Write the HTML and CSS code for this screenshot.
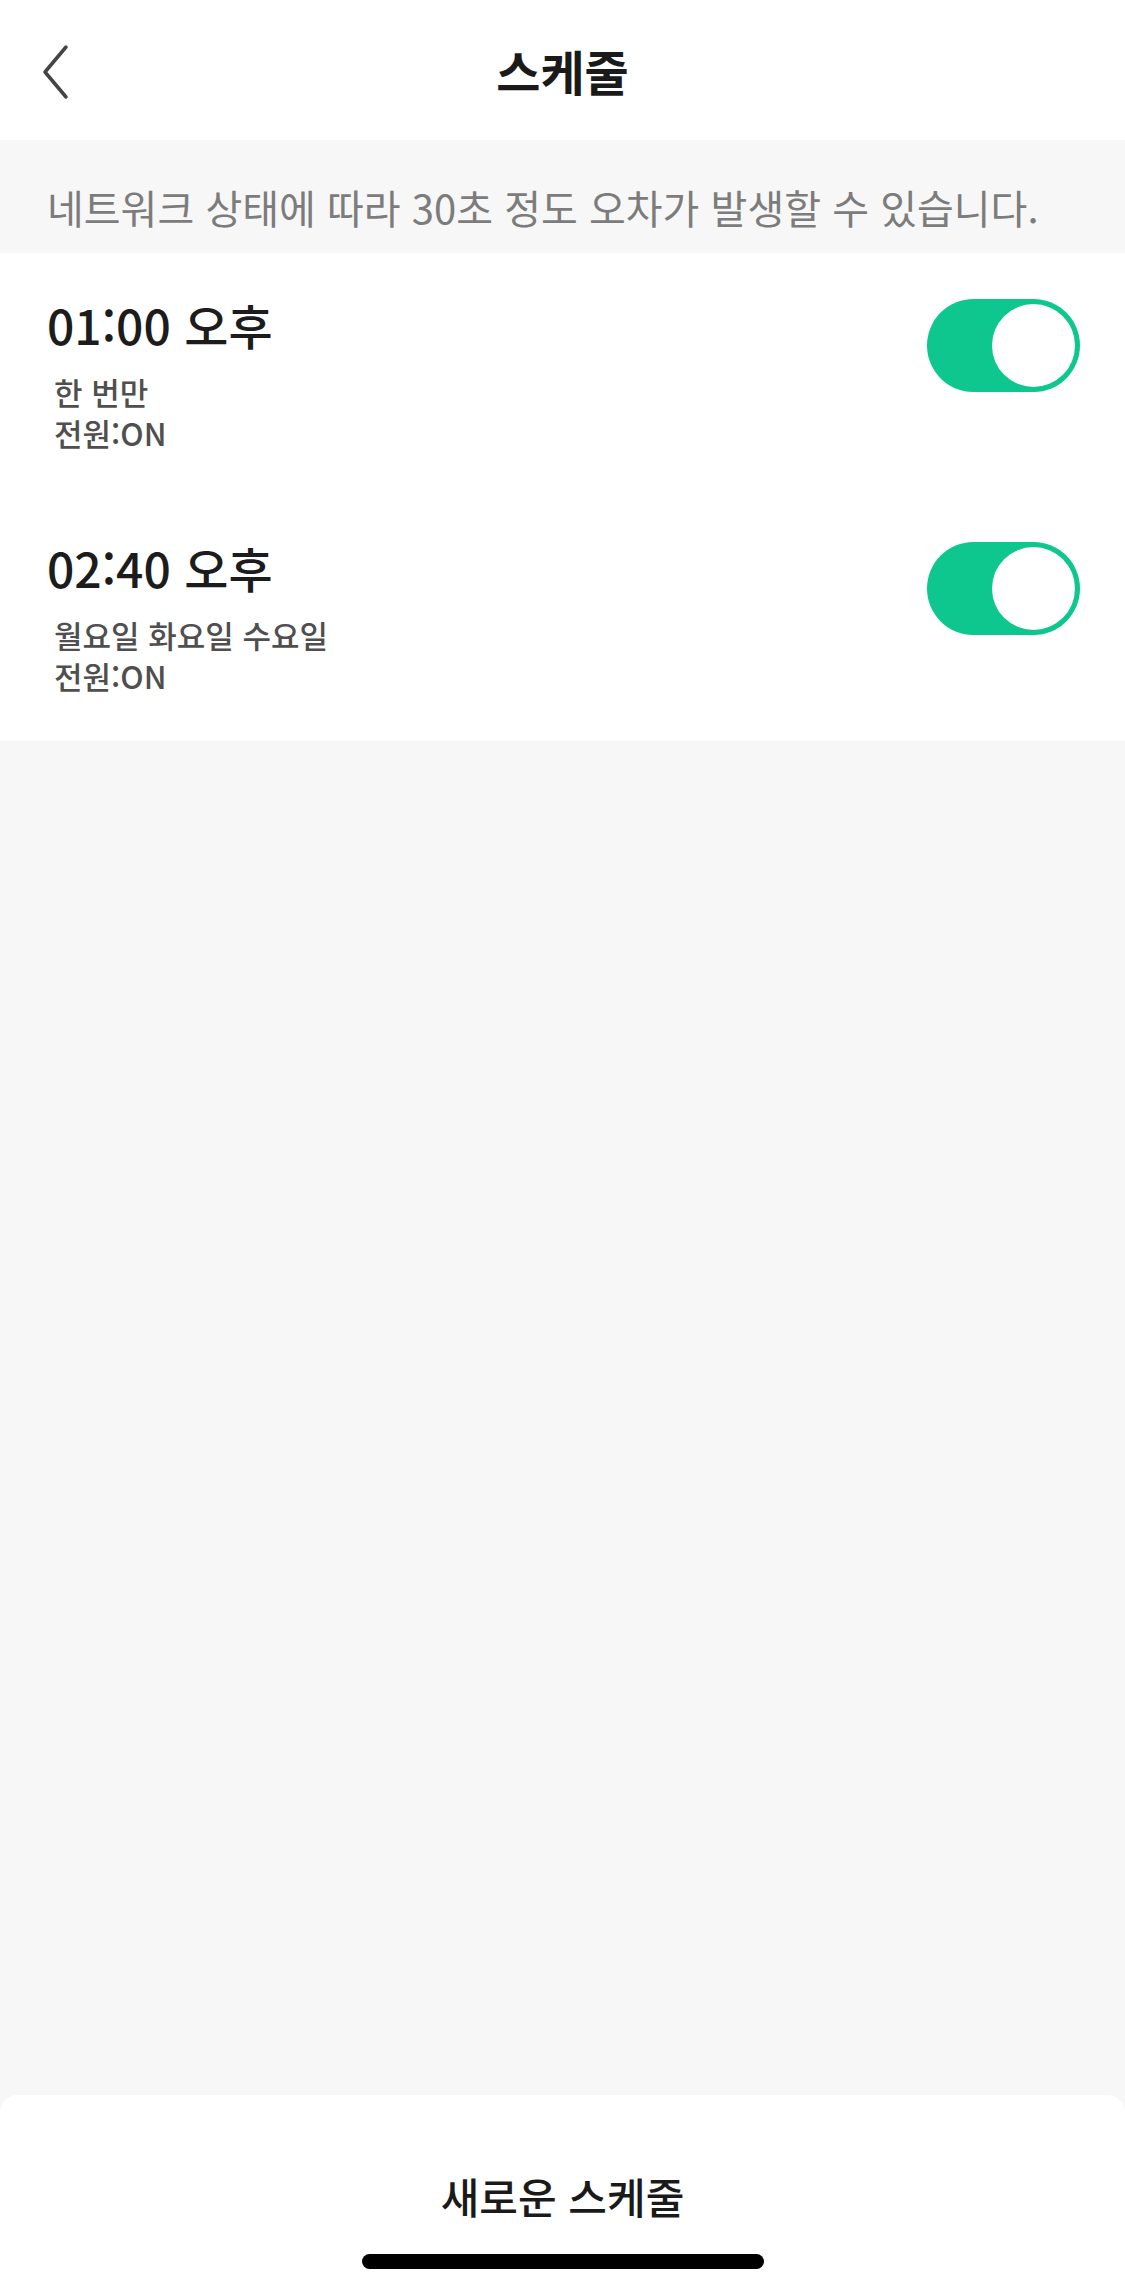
FILE: index.html
```html
<!DOCTYPE html>
<html lang="ko">
<head>
    <meta charset="UTF-8">
    <meta name="viewport" content="width=device-width, initial-scale=1.0">
    <title>스케줄</title>
    <link rel="stylesheet" href="styles.css">
</head>
<body>
    <div class="screen">
        <header class="top-bar">
            <button class="back-button" aria-label="뒤로">
                <svg width="32" height="56" viewBox="0 0 32 56">
                    <path d="M26 3 L5 28 L26 53" fill="none" stroke="#444" stroke-width="3.5" stroke-linecap="round" stroke-linejoin="round"/>
                </svg>
            </button>
            <h1 class="title">스케줄</h1>
            <div></div>
        </header>

        <div class="notice">네트워크 상태에 따라 30초 정도 오차가 발생할 수 있습니다.</div>

        <div class="schedule-list">
            <div class="schedule-item">
                <div class="schedule-info">
                    <div class="schedule-time">01:00 오후</div>
                    <div class="schedule-sub">한 번만</div>
                    <div class="schedule-sub">전원:ON</div>
                </div>
                <div class="toggle on"><span class="knob"></span></div>
            </div>
            <div class="schedule-item">
                <div class="schedule-info">
                    <div class="schedule-time">02:40 오후</div>
                    <div class="schedule-sub">월요일 화요일 수요일</div>
                    <div class="schedule-sub">전원:ON</div>
                </div>
                <div class="toggle on"><span class="knob"></span></div>
            </div>
        </div>

        <div class="spacer"></div>

        <footer class="bottom-sheet">
            <button class="new-button">새로운 스케줄</button>
            <div class="home-indicator"></div>
        </footer>
    </div>
</body>
</html>
```

FILE: styles.css
```css
* {
    box-sizing: border-box;
    margin: 0;
    padding: 0;
}

body {
    background: #f7f7f7;
    font-family: "Noto Sans CJK KR", "Noto Sans", sans-serif;
    color: #1a1a1a;
}

.screen {
    display: flex;
    flex-direction: column;
    min-height: 100vh;
}

.top-bar {
    display: grid;
    grid-template-columns: 1fr auto 1fr;
    align-items: center;
    height: 140px;
    background: #fff;
    padding: 0 40px;
}

.back-button {
    justify-self: start;
    display: flex;
    background: none;
    border: none;
    margin-top: 4px;
}

.title {
    font-size: 48px;
    font-weight: 700;
    line-height: 56px;
    color: #1a1a1a;
}

.notice {
    height: 113px;
    padding: 44px 47px 0;
    font-size: 40px;
    line-height: 46px;
    color: #7c7c7c;
    white-space: nowrap;
}

.schedule-list {
    background: #fff;
    padding-bottom: 2px;
}

.schedule-item {
    display: flex;
    justify-content: space-between;
    align-items: flex-start;
    padding: 41px 45px 43px 47px;
}

.schedule-time {
    font-size: 48px;
    font-weight: 500;
    line-height: 60px;
    color: #1c1c1c;
    margin-bottom: 17px;
}

.schedule-sub {
    font-size: 31px;
    font-weight: 500;
    line-height: 41px;
    color: #4f4f4f;
    padding-left: 7px;
}

.toggle {
    width: 153px;
    height: 93px;
    border-radius: 47px;
    background: #e5e5e5;
    padding: 5px;
    display: flex;
    margin-top: 5px;
}

.toggle.on {
    background: #0dc78f;
    justify-content: flex-end;
}

.knob {
    width: 83px;
    height: 83px;
    border-radius: 50%;
    background: #fff;
}

.spacer {
    flex: 1;
}

.bottom-sheet {
    background: #fff;
    border-radius: 18px 18px 0 0;
    height: 197px;
    display: flex;
    flex-direction: column;
    align-items: center;
    padding-top: 73px;
}

.new-button {
    background: none;
    border: none;
    font-family: inherit;
    font-size: 42px;
    font-weight: 500;
    line-height: 56px;
    color: #1a1a1a;
}

.home-indicator {
    width: 402px;
    height: 15px;
    border-radius: 8px;
    background: #000;
    margin-top: 30px;
}
```
